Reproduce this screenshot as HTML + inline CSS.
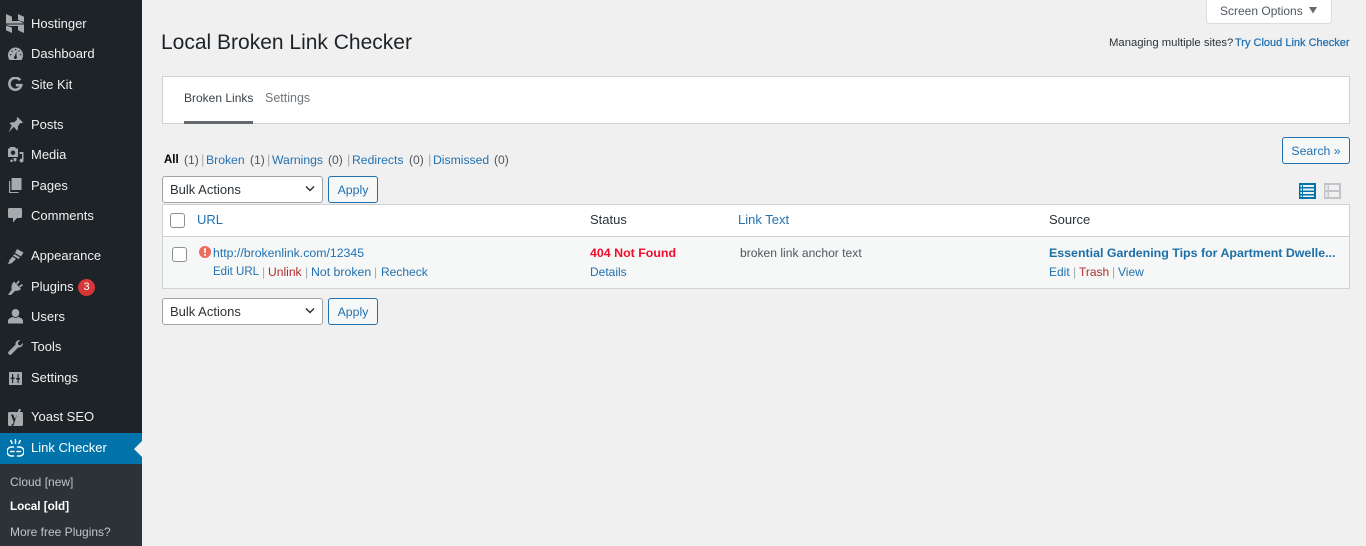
<!DOCTYPE html>
<html><head><meta charset="utf-8"><style>
html,body{margin:0;padding:0;width:1366px;height:546px;overflow:hidden;background:#f0f0f1;font-family:"Liberation Sans",sans-serif;font-size:13px;color:#3c434a}
.t{position:absolute;white-space:nowrap;line-height:18px}
a,.l{color:#2271b1;text-decoration:none}
.r{color:#b32d2e}.g{color:#50575e}.s{color:#a7aaad}
.f{font-size:12.200px}
.a{font-size:12.100px}
#side{position:absolute;left:0;top:0;width:142px;height:546px;background:#1d2327}
#side .m{position:absolute;left:31px;color:#f0f0f1;line-height:18px;white-space:nowrap}
#side .u{position:absolute;left:10px;line-height:18px;white-space:nowrap;font-size:12px;color:#c3c4c7}
#side svg{position:absolute}
#cur{position:absolute;left:0;top:433px;width:142px;height:31px;background:#0073aa}
#sub{position:absolute;left:0;top:464px;width:142px;height:82px;background:#2c3338}
#arrow{position:absolute;left:134px;top:441px;border:8px solid transparent;border-left:0;border-right-color:#f0f0f1}
.box{position:absolute;box-sizing:border-box;border:1px solid #d0d1d3;background:#fff}
.sel{position:absolute;box-sizing:border-box;left:162px;width:161px;height:27px;background:#fff;border:1px solid #a0a3a8;border-radius:3px;color:#2c3338;font-size:13px;line-height:25px;padding-left:7px}
.sel svg{position:absolute;right:6px;top:8px}
.btn{position:absolute;box-sizing:border-box;background:#f6f7f7;border:1px solid #2271b1;border-radius:3px;color:#2271b1;text-align:center;line-height:26px;font-size:12.300px}
.cb{position:absolute;box-sizing:border-box;width:15px;height:15px;background:#fff;border:1px solid #8c8f94;border-radius:3px}
</style></head><body>
<div id="side">
<div id="cur"></div><div id="sub"></div><div id="arrow"></div>

<svg style="left:6px;top:14px" width="18" height="19" viewBox="0 0 18 19" fill="#a7aaad"><path d="M0 0l6 2.800V7h8l4 2.500H0zM12 0l6 2.800V8l-6-2zM18 19l-6-2.800V12H4L0 10.500h18zM0 11.500l6 2V19l-6-2.800z"/></svg>
<div class="m" style="top:15px">Hostinger</div>

<svg style="left:8px;top:47px" width="15" height="14" viewBox="0 0 15 14"><path fill="#a7aaad" d="M7.500 0.500A7.500 7.500 0 0 0 0 8c0 2.200.8 4 1.500 5h12c.7-1 1.500-2.800 1.500-5A7.500 7.500 0 0 0 7.500 .5z"/><path fill="#1d2327" d="M6.400 11.500a1.400 1.400 0 0 1 .4-2.400L8.400 4.500 8.500 9.300a1.400 1.400 0 0 1-2.100 2.200zM7 2h1.200v1.200H7zM3.500 3.500h1.200v1.200H3.500zM10.500 3.500h1.200v1.200h-1.200zM2 7h1.200v1.200H2zM12 7h1.200v1.200H12z"/></svg>
<div class="m" style="top:45px">Dashboard</div>

<svg style="left:8px;top:77px" width="15" height="15" viewBox="0 0 15 15" fill="none" stroke="#a7aaad" stroke-width="2.600"><path d="M12.200 3.200A6 6 0 1 0 13.200 8.200H7.800"/></svg>
<div class="m" style="top:76px">Site Kit</div>

<svg style="left:8px;top:117px" width="15" height="16" viewBox="0 0 15 16" fill="#a7aaad"><path d="M9.500 0L15 5.500 13.600 6.300 12.300 6 9.800 9.500c.4 1.600.2 2.800-.8 4L5.800 9.800 0.500 15.500 3.800 8.500 1.500 6.300c1.200-1 2.700-1.300 4.300-.8L9 2.700l-.3-1.300z"/></svg>
<div class="m" style="top:116px">Posts</div>

<svg style="left:7px;top:147px" width="17" height="16" viewBox="0 0 17 16" fill="#a7aaad"><path fill-rule="evenodd" d="M3 0h5l1 1.500h2V10H1V1.500h1.500zM6 3.500a2.200 2.200 0 1 0 .01 0z"/><path d="M12.500 5h4v8.500a2 2 0 1 1-1.500-1.900V7h-2.500zM6 11h3.500v2a1.500 1.500 0 1 1-1-1.400V12H7zM4.500 12.500a1.300 1.300 0 1 0 .01 0z"/></svg>
<div class="m" style="top:146px">Media</div>

<svg style="left:8px;top:178px" width="14" height="15" viewBox="0 0 14 15" fill="#a7aaad"><path d="M3.500 0H13.500V12H3.500z"/><path d="M1 3h1.200v11H10.500v1H1z"/></svg>
<div class="m" style="top:177px">Pages</div>

<svg style="left:8px;top:208px" width="14" height="15" viewBox="0 0 14 15" fill="#a7aaad"><path d="M1.500 0h11A1.500 1.500 0 0 1 14 1.500v7A1.500 1.500 0 0 1 12.500 10H9l-4 4.500V10H1.500A1.500 1.500 0 0 1 0 8.500v-7A1.500 1.500 0 0 1 1.500 0z"/></svg>
<div class="m" style="top:207px">Comments</div>

<svg style="left:7px;top:249px" width="17" height="15" viewBox="0 0 17 15" fill="#a7aaad"><path d="M10 0l6.500 3.500-2.500 4-6-3.500zM7.200 5l5.800 3.400-1.500 1.600-5.300-3.200zM5.500 7.500L9 10 5.500 13.500C4 15 .5 15 .5 14.500c1.500-.5 1.500-2 2-3.500z"/></svg>
<div class="m" style="top:247px">Appearance</div>

<svg style="left:8px;top:280px" width="15" height="15" viewBox="0 0 15 15" fill="#a7aaad"><path d="M6 1.500l7 7.500c-1.500 1.500-4 2.300-5.800 1.700L3 15l-3-.2 3.800-5.300C3 7.500 3.500 4 6 1.500zM10.500 0.500l1.200 1L9.300 4.600 8 3.500zM14 4l1 1.200-3 2.300-1.200-1.200z"/></svg>
<div class="m" style="top:278px">Plugins</div>
<div style="position:absolute;left:78px;top:279px;width:17px;height:17px;border-radius:50%;background:#d63638;color:#fff;font-size:11px;line-height:17px;text-align:center">3</div>

<svg style="left:8px;top:309px" width="15" height="15" viewBox="0 0 15 15" fill="#a7aaad"><path d="M7.500 0a3.800 3.800 0 0 1 3.800 3.800c0 2-1.300 4.400-3.800 4.400S3.700 5.800 3.700 3.800A3.800 3.800 0 0 1 7.500 0zM5 8c1.500 1.300 3.500 1.300 5 0 3 .6 5 2 5 4v2.500H0V12c0-2 2-3.400 5-4z"/></svg>
<div class="m" style="top:308px">Users</div>

<svg style="left:8px;top:340px" width="15" height="15" viewBox="0 0 15 15" fill="#a7aaad"><path d="M14.800 3c.6 2-1.300 5-4.500 4.400L3.500 14.300c-.8.8-2 .8-2.800 0s-.8-2 0-2.800L7.500 4.700C7 2 9.500-.3 12.300.200L9.800 2.800l.6 2.100 2.100.6z"/></svg>
<div class="m" style="top:338px">Tools</div>

<svg style="left:9px;top:372px" width="13" height="13" viewBox="0 0 13 13"><path fill="#a7aaad" d="M0 0h13v13H0z"/><path fill="#1d2327" d="M3 2h1.200v3.500H5.500V7H4.200v4H3V7H1.800V5.500H3zM8.500 2H9.700v4H11v1.500H9.700V11H8.500V7.500H7.200V6H8.500z"/></svg>
<div class="m" style="top:369px">Settings</div>

<svg style="left:8px;top:409px" width="15" height="18" viewBox="0 0 15 18"><path fill="#a7aaad" d="M1.500 3h12A1.500 1.500 0 0 1 15 4.500v11a1.500 1.500 0 0 1-1.500 1.500h-12A1.500 1.500 0 0 1 0 15.500v-11A1.500 1.500 0 0 1 1.500 3z"/><path fill="#1d2327" d="M3 5.500h2.200L7 10l2-4.500h1L6.500 14.500C6 16 5 17 3.500 17v-1.500c1 0 1.500-.5 1.800-1.500L5.700 13z"/><path fill="#a7aaad" d="M10.800 0H13L8 15H6z"/></svg>
<div class="m" style="top:408px">Yoast SEO</div>

<svg style="left:7px;top:439px" width="17" height="20" viewBox="0 0 17 20" fill="none" stroke="#fff" stroke-width="1.500" stroke-linecap="round"><path d="M8.500 .8v3.500M3.800 1.500l1.300 2.800M13.200 1.500l-1.300 2.800"/><path d="M6.500 8H4.500a4.300 4.300 0 0 0 0 9H6.500M3.500 12.500H7M10.500 8H12.500a4.300 4.300 0 0 1 0 9H10.500M10 12.500H13.500"/></svg>
<div class="m" style="top:439px;color:#fff">Link Checker</div>

<div class="u" style="top:473px">Cloud [new]</div>
<div class="u" style="top:498px;color:#fff;font-weight:bold;font-size:11.700px">Local [old]</div>
<div class="u" style="top:523px">More free Plugins?</div>
</div>

<div class="t" style="left:161px;top:30px;font-size:21px;line-height:26px;color:#1d2327">Local Broken Link Checker</div>

<div class="box" style="left:1206px;top:-1px;width:126px;height:25px;border-color:#dcdcde;border-radius:0 0 4px 4px"></div>
<div class="t g" style="left:1220px;top:2px;font-size:12px">Screen Options</div>
<svg style="position:absolute;left:1309px;top:7px" width="8" height="7"><path fill="#646970" d="M0 0h8L4 6.500z"/></svg>

<div class="t" style="left:1109px;top:34px;font-size:11.300px;color:#2c3338">Managing multiple sites?</div>
<div class="t" style="left:1235px;top:34px;font-size:11px"><a style="-webkit-text-stroke:.25px #2271b1">Try Cloud Link Checker</a></div>

<div class="box" style="left:162px;top:76px;width:1188px;height:48px"></div>
<div class="t" style="left:184px;top:89px;font-size:12px;color:#3c434a">Broken Links</div>
<div class="t" style="left:265px;top:89px;font-size:12.500px;color:#72777c">Settings</div>
<div style="position:absolute;left:184px;top:121px;width:69px;height:3px;background:#646970"></div>

<div class="t" style="left:164px;top:151px;font-size:11.500px"><b style="color:#000">All</b></div>
<div class="t g a" style="left:184px;top:151px">(1)</div>
<div class="t s" style="left:201px;top:151px">|</div>
<div class="t f" style="left:206px;top:151px"><a>Broken</a></div>
<div class="t g a" style="left:250px;top:151px">(1)</div>
<div class="t s" style="left:267px;top:151px">|</div>
<div class="t f" style="left:272px;top:151px"><a>Warnings</a></div>
<div class="t g a" style="left:328px;top:151px">(0)</div>
<div class="t s" style="left:347px;top:151px">|</div>
<div class="t f" style="left:352px;top:151px"><a>Redirects</a></div>
<div class="t g a" style="left:409px;top:151px">(0)</div>
<div class="t s" style="left:428px;top:151px">|</div>
<div class="t f" style="left:433px;top:151px"><a>Dismissed</a></div>
<div class="t g a" style="left:494px;top:151px">(0)</div>

<div class="btn" style="left:1282px;top:137px;width:68px;height:27px">Search »</div>

<div class="sel" style="top:176px">Bulk Actions<svg width="12" height="8" viewBox="0 0 12 8" fill="none" stroke="#2c3338" stroke-width="1.500"><path d="M2 1.500l4 4 4-4"/></svg></div>
<div class="btn" style="left:328px;top:176px;width:50px;height:27px">Apply</div>

<svg style="position:absolute;left:1299px;top:183px" width="17" height="16" viewBox="0 0 17 16"><path fill="#0073aa" d="M0 0h17v16H0z"/><path fill="#f0f0f1" d="M4 2h11v2H4zM4 5.500h11v2H4zM4 9h11v2H4zM4 12.500h11v1.500H4zM1.500 2H3v2H1.500zM1.500 5.500H3v2H1.500zM1.500 9H3v2H1.500zM1.500 12.500H3V14H1.500z"/></svg>
<svg style="position:absolute;left:1324px;top:183px" width="17" height="16" viewBox="0 0 17 16"><path fill="#c3c4c7" d="M0 0h17v16H0z"/><path fill="#f0f0f1" d="M5 2h10v5H5zM5 9h10v5H5zM1.500 2H3.500v5H1.500zM1.500 9H3.500v5H1.500z"/></svg>

<div class="box" style="left:162px;top:204px;width:1188px;height:85px"></div>
<div style="position:absolute;left:163px;top:236px;width:1186px;height:52px;background:#f6f7f7;border-top:1px solid #d0d1d3;box-sizing:border-box"></div>

<div class="cb" style="left:170px;top:213px"></div>
<div class="t" style="left:197px;top:211px"><a>URL</a></div>
<div class="t" style="left:590px;top:211px;color:#2c3338">Status</div>
<div class="t" style="left:738px;top:211px"><a>Link Text</a></div>
<div class="t" style="left:1049px;top:211px;color:#2c3338">Source</div>

<div class="cb" style="left:172px;top:247px"></div>
<svg style="position:absolute;left:199px;top:246px" width="12" height="12" viewBox="0 0 12 12"><circle cx="6" cy="6" r="6" fill="#ec6a5e"/><path fill="#fff" d="M5 2.200h2L6.700 7H5.300zM5.100 8h1.800v1.800H5.100z"/></svg>
<div class="t" style="left:213px;top:244px;font-size:12.300px"><a>http://brokenlink.com/12345</a></div>
<div class="t a" style="left:213px;top:263px;font-size:11.500px"><a>Edit URL</a></div>
<div class="t s" style="left:262px;top:263px;font-size:12px">|</div>
<div class="t r" style="left:268px;top:263px;font-size:12.100px">Unlink</div>
<div class="t s" style="left:305px;top:263px;font-size:12px">|</div>
<div class="t" style="left:311px;top:263px;font-size:12.300px"><a>Not broken</a></div>
<div class="t s" style="left:374px;top:263px;font-size:12px">|</div>
<div class="t" style="left:381px;top:263px;font-size:12px"><a>Recheck</a></div>

<div class="t" style="left:590px;top:244px;font-size:12.400px;font-weight:bold;color:#ee0e2c">404 Not Found</div>
<div class="t" style="left:590px;top:263px;font-size:12px"><a>Details</a></div>
<div class="t g" style="left:740px;top:244px;font-size:12.100px">broken link anchor text</div>

<div class="t" style="left:1049px;top:244px;font-size:12.400px;font-weight:bold;color:#1d6fa8">Essential Gardening Tips for Apartment Dwelle...</div>
<div class="t" style="left:1049px;top:263px;font-size:12px"><a>Edit</a></div>
<div class="t s" style="left:1073px;top:263px;font-size:12px">|</div>
<div class="t r" style="left:1079px;top:263px;font-size:12px">Trash</div>
<div class="t s" style="left:1112px;top:263px;font-size:12px">|</div>
<div class="t" style="left:1118px;top:263px;font-size:12px"><a>View</a></div>

<div class="sel" style="top:298px">Bulk Actions<svg width="12" height="8" viewBox="0 0 12 8" fill="none" stroke="#2c3338" stroke-width="1.500"><path d="M2 1.500l4 4 4-4"/></svg></div>
<div class="btn" style="left:328px;top:298px;width:50px;height:27px">Apply</div>
</body></html>
